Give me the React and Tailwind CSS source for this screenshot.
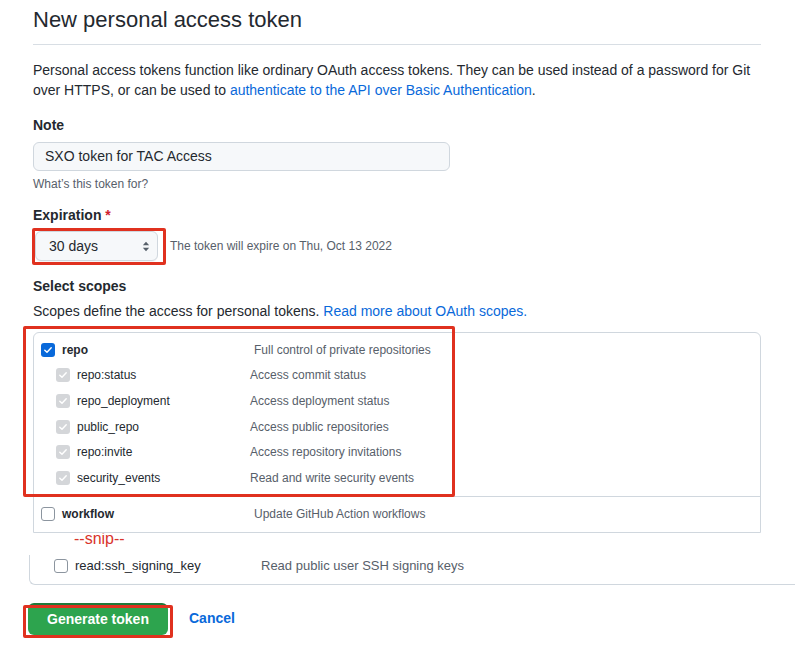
import React from "react";

function Check({ color = "white" }) {
  return (
    <svg viewBox="0 0 14 14" className="w-[10px] h-[10px]">
      <path d="M2.5 7.2 L5.6 10.2 L11.5 3.8" fill="none" stroke={color} strokeWidth="2" strokeLinecap="round" strokeLinejoin="round" />
    </svg>
  );
}

function Box({ kind }) {
  if (kind === "on")
    return (
      <span className="w-[14px] h-[14px] rounded-[3px] bg-[#0969da] flex items-center justify-center shrink-0">
        <Check />
      </span>
    );
  if (kind === "dis")
    return (
      <span className="w-[14px] h-[14px] rounded-[3px] bg-[#d4d6d9] flex items-center justify-center shrink-0">
        <Check />
      </span>
    );
  return <span className="w-[14px] h-[14px] rounded-[3px] border border-[#8c959f] bg-white shrink-0" />;
}

const children = [
  ["repo:status", "Access commit status"],
  ["repo_deployment", "Access deployment status"],
  ["public_repo", "Access public repositories"],
  ["repo:invite", "Access repository invitations"],
  ["security_events", "Read and write security events"],
];

export default function App() {
  return (
    <div className="w-[795px] h-[655px] overflow-hidden bg-white text-[#24292f] font-['Liberation_Sans',Arial,sans-serif]">
      <div className="pl-[33px] pr-[34px] pt-[5px]">
        <h1 className="text-[22px] leading-[30px] font-normal pb-[9px] border-b border-[#d8dee4]">
          New personal access token
        </h1>
        <p className="mt-[16px] text-[14px] leading-[19.5px]">
          Personal access tokens function like ordinary OAuth access tokens. They can be used instead of a password for Git over HTTPS, or can be used to <span className="text-[#0969da]">authenticate to the API over Basic Authentication</span>.
        </p>

        <div className="mt-[15px] text-[14px] leading-[20px] font-bold">Note</div>
        <div className="mt-[7px] w-[417px] h-[29px] rounded-[6px] border border-[#d0d7de] bg-[#f6f8fa] flex items-center pl-[11px] text-[14px]">
          SXO token for TAC Access
        </div>
        <div className="mt-[4px] text-[12px] leading-[18px] text-[#57606a]">What’s this token for?</div>

        <div className="mt-[12px] text-[14px] leading-[20px] font-bold">
          Expiration <span className="text-[#cf222e]">*</span>
        </div>
        <div className="mt-[6px] flex items-center h-[30px]">
          <div className="relative">
            <div className="w-[123px] h-[30px] ml-[2px] rounded-[6px] border border-[#d0d7de] bg-[#f6f8fa] shadow-[0_1px_0_rgba(27,31,36,0.04)] flex items-center justify-between pl-[13px] pr-[7px] text-[14px]">
              <span>30 days</span>
              <svg viewBox="0 0 10 14" className="w-[8px] h-[11px]">
                <path d="M5 1 L9 5.5 H1 Z M5 13 L1 8.5 H9 Z" fill="#57606a" />
              </svg>
            </div>
            <div className="absolute left-[-1px] top-[-3px] w-[134px] h-[37px] border-[3px] border-[#e0311f] rounded-[2px] pointer-events-none" />
          </div>
          <span className="ml-[12px] text-[12px] text-[#57606a]">The token will expire on Thu, Oct 13 2022</span>
        </div>

        <div className="mt-[15px] text-[14px] leading-[20px] font-bold">Select scopes</div>
        <div className="mt-[5px] text-[14px] leading-[20px]">
          Scopes define the access for personal tokens. <span className="text-[#0969da]">Read more about OAuth scopes.</span>
        </div>

        <div className="relative mt-[11px]">
          <div className="border border-[#d0d7de] rounded-t-[6px] text-[12px]">
            <div className="pt-[4px] pb-[5px] border-b border-[#d0d7de]">
              <div className="h-[25.6px] flex items-center pl-[7px]">
                <Box kind="on" />
                <span className="ml-[7px] w-[192px] font-bold">repo</span>
                <span className="text-[#57606a]">Full control of private repositories</span>
              </div>
              {children.map(([n, d]) => (
                <div key={n} className="h-[25.6px] flex items-center pl-[22px]">
                  <Box kind="dis" />
                  <span className="ml-[7px] w-[173px]">{n}</span>
                  <span className="text-[#57606a]">{d}</span>
                </div>
              ))}
            </div>
            <div className="h-[35px] flex items-center pl-[7px]">
              <Box kind="off" />
              <span className="ml-[7px] w-[192px] font-bold">workflow</span>
              <span className="text-[#57606a]">Update GitHub Action workflows</span>
            </div>
          </div>
          <div className="absolute left-[-10px] top-[-6px] w-[432px] h-[171px] border-[3px] border-[#e0311f] rounded-[2px] pointer-events-none" />
        </div>

        <div className="mt-[-2px] text-[16px] leading-[16px] text-[#d9342b] pl-[41px]">--snip--</div>

        <div className="pt-[8px] ml-[-4px] mr-[-60px]">
          <div className="border-l border-b border-[#d0d7de] rounded-bl-[6px] pb-[7px]">
            <div className="h-[22px] flex items-center pl-[24px] text-[13px]">
              <Box kind="off" />
              <span className="ml-[7px] w-[186px]">read:ssh_signing_key</span>
              <span className="text-[#57606a]">Read public user SSH signing keys</span>
            </div>
          </div>
        </div>

        <div className="mt-[18px] flex items-center">
          <div className="relative ml-[-5px]">
            <div className="w-[140px] h-[32px] rounded-[6px] bg-[#2da44e] border-t-[2px] border-[#1f7a3a] text-white text-[14px] font-bold flex items-center justify-center">
              Generate token
            </div>
            <div className="absolute left-[-5px] top-[2px] w-[150px] h-[33px] border-[3px] border-[#e0311f] rounded-[2px] pointer-events-none" />
          </div>
          <span className="ml-[21px] text-[14px] font-bold text-[#0969da]">Cancel</span>
        </div>
      </div>
    </div>
  );
}
